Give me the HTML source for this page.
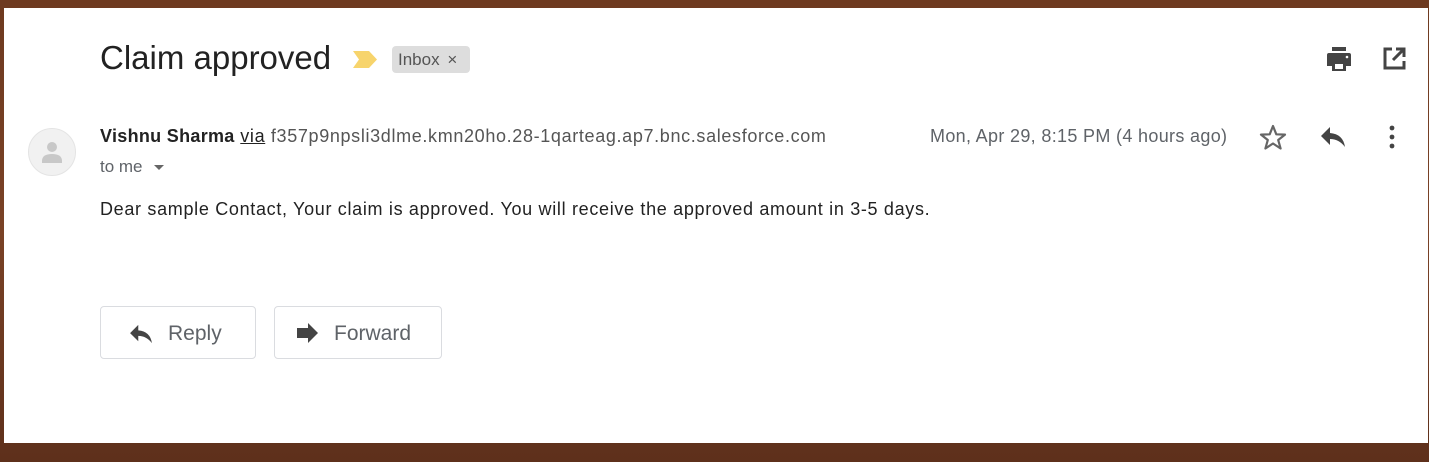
<!DOCTYPE html>
<html><head><meta charset="utf-8"><style>
html,body{margin:0;padding:0;}
body{width:1429px;height:462px;position:relative;overflow:hidden;background:linear-gradient(180deg,#6e3a20,#7a4226 50%,#5e301b);font-family:"Liberation Sans",Arial,sans-serif;}
.panel{position:absolute;left:4px;top:8px;width:1424px;height:435px;background:#fff;}
.abs{position:absolute;}
.title{left:100px;top:39px;font-size:33px;color:#222;white-space:nowrap;}
.tag{left:392px;top:46px;width:78px;height:27px;background:#ddd;border-radius:4px;font-size:17px;color:#555;line-height:27px;padding-left:6px;box-sizing:border-box;}
.avatar{left:28px;top:128px;width:48px;height:48px;border-radius:50%;background:#f1f1f1;border:1px solid #e4e4e4;box-sizing:border-box;}
.from{left:100px;top:126px;font-size:18px;letter-spacing:0.65px;color:#555;white-space:nowrap;}
.from b{color:#222;letter-spacing:0.3px;}
.from u{color:#222;}
.tome{left:100px;top:157px;font-size:17px;color:#5f6368;}
.date{left:930px;top:126px;font-size:18px;letter-spacing:0.33px;color:#5f6368;white-space:nowrap;}
.body{left:100px;top:199px;font-size:18px;letter-spacing:0.68px;color:#222;white-space:nowrap;}
.btn{top:306px;height:53px;border:1px solid #dadce0;border-radius:4px;box-sizing:border-box;font-size:21px;color:#5f6368;line-height:53px;}
</style></head><body>
<div class="panel"></div>
<div class="abs title">Claim approved</div>
<svg class="abs" style="left:353px;top:51px" width="24" height="17" viewBox="0 0 24 17"><path d="M0 0H16L24 8.5L16 17H0L6 8.5Z" fill="#f7d46c"/></svg>
<div class="abs tag">Inbox <span style="margin-left:3px">×</span></div>
<svg class="abs" style="left:1326px;top:47px" width="26" height="25" viewBox="0 0 26 25"><rect x="6" y="0" width="14" height="4" fill="#444"/><path d="M3 6H23Q25 6 25 8V19H20V15H6V19H1V8Q1 6 3 6Z" fill="#444"/><rect x="6" y="15" width="14" height="9" fill="#444"/><rect x="9" y="17" width="8" height="5" fill="#fff"/><circle cx="21" cy="10" r="1.3" fill="#fff"/></svg>
<svg class="abs" style="left:1382px;top:47px" width="24" height="24" viewBox="0 0 24 24"><path d="M10 2H3V21H22V14" fill="none" stroke="#444" stroke-width="3"/><path d="M14 2H22V10M22 2L11 13" fill="none" stroke="#444" stroke-width="3"/></svg>
<div class="abs avatar"><svg width="46" height="46" viewBox="0 0 46 46"><circle cx="23" cy="18" r="5" fill="#c8c8c8"/><path d="M13 32Q13 25 23 25Q33 25 33 32V34H13Z" fill="#c8c8c8"/></svg></div>
<div class="abs from"><b>Vishnu Sharma</b> <u>via</u> f357p9npsli3dlme.kmn20ho.28-1qarteag.ap7.bnc.salesforce.com</div>
<div class="abs tome">to me <svg width="12" height="8" viewBox="0 0 12 8" style="margin-left:6px;vertical-align:middle"><path d="M1 1H11L6 6Z" fill="#666"/></svg></div>
<div class="abs date">Mon, Apr 29, 8:15 PM (4 hours ago)</div>
<svg class="abs" style="left:1259px;top:124px" width="28" height="26" viewBox="0 0 28 26"><path d="M14 2L17.3 10.3L26 10.6L19.2 16L21.6 24.5L14 19.5L6.4 24.5L8.8 16L2 10.6L10.7 10.3Z" fill="none" stroke="#666" stroke-width="2.2" stroke-linejoin="round"/></svg>
<svg class="abs" style="left:1320px;top:126px" width="26" height="22" viewBox="0 0 26 22"><path d="M10 1L1 10L10 19V13Q19 13 25 21Q23 8 10 7Z" fill="#444"/></svg>
<svg class="abs" style="left:1387px;top:125px" width="10" height="26" viewBox="0 0 10 26"><circle cx="5" cy="3" r="2.4" fill="#444"/><circle cx="5" cy="12" r="2.4" fill="#444"/><circle cx="5" cy="21" r="2.4" fill="#444"/></svg>
<div class="abs body">Dear sample Contact, Your claim is approved. You will receive the approved amount in 3-5 days.</div>
<div class="abs btn" style="left:100px;width:156px"><svg class="abs" style="left:28px;top:17px" width="24" height="20" viewBox="0 0 26 22"><path d="M10 1L1 10L10 19V13Q19 13 25 21Q23 8 10 7Z" fill="#444"/></svg><span class="abs" style="left:67px;top:0">Reply</span></div>
<div class="abs btn" style="left:274px;width:168px"><svg class="abs" style="left:22px;top:16px" width="22" height="20" viewBox="0 0 22 20"><path d="M0 5H11V0L21 10L11 20V15H0Z" fill="#444"/></svg><span class="abs" style="left:59px;top:0">Forward</span></div>
</body></html>
